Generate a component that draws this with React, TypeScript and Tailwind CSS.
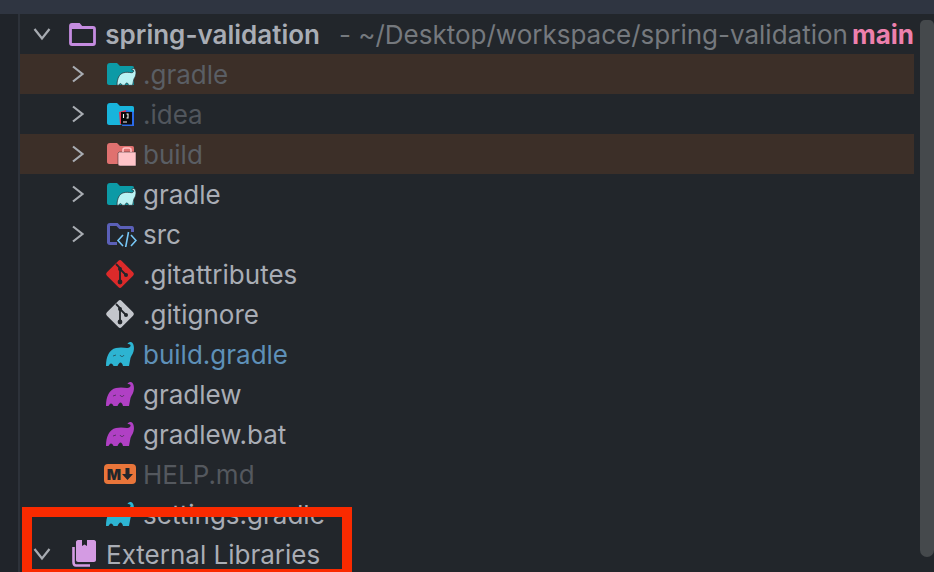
import type { ReactNode } from 'react'

const elephantPath =
	'M0 24 C0 15 3 7.5 10 6 C14 5 18 5.5 21 6 C23 6.2 25 5 24.5 3 C24 2 22.5 2.5 21.5 2 C22 0.5 23.5 0 25 0 C28 1 28.5 6 27.5 9.5 C26.5 13 25 14 24.5 16 L23 24 L17 24 C16.5 22 15.5 20.5 14.5 20.5 C13.5 20.5 12.5 22 11.5 24 L7.5 24 C7 22.5 6 21.5 5 21.5 C4 21.5 3 23 2.5 24 Z'

function Elephant({ color }: { color: string }) {
	return (
		<svg width="28" height="24" viewBox="0 0 28 24">
			<path d={elephantPath} fill={color} />
			<path d="M7 14 L10 13 M14 13 C15 15 17 15 18 13" stroke="#22262b" strokeWidth="1" fill="none" opacity="0.6" />
		</svg>
	)
}

function GradleFolder() {
	return (
		<svg width="30" height="24" viewBox="0 0 30 24" className="mt-0.5 ml-px">
			<path d="M0 3 C0 1 1 0 3 0 L10 0 L13 3 L25 3 C27 3 27 4 27 6 L27 22 L2 22 C1 22 0 21 0 20 Z" fill="#0c9aa6" />
			<g transform="translate(10 5.5) scale(0.68 0.7)">
				<path d={elephantPath} fill="#b9f2f3" stroke="#22262b" strokeWidth="1" />
			</g>
		</svg>
	)
}

function IdeaFolder() {
	return (
		<svg width="30" height="24" viewBox="0 0 30 24" className="mt-0.5 ml-px">
			<path d="M0 3 C0 1 1 0 3 0 L10 0 L13 3 L25 3 C27 3 27 4 27 6 L27 22 L2 22 C1 22 0 21 0 20 Z" fill="#18b4dc" />
			<path d="M12 9 L19 7 L19 22 L13 21 Z" fill="#e6324f" />
			<path d="M19 7 L27 9 L27 23 L15 23 Z" fill="#2a6bea" />
			<rect x="14" y="9" width="11" height="12.5" fill="#0b0b0d" />
			<path d="M16.5 11 L16.5 15 M19.5 11 L21.5 11 M21 11 L21 15 L19.5 15 M16 19 L20 19" stroke="#f4f4f4" strokeWidth="1.1" fill="none" />
		</svg>
	)
}

function BuildFolder() {
	return (
		<svg width="30" height="24" viewBox="0 0 30 24" className="mt-0.5 ml-px">
			<path d="M0 3 C0 1 1 0 3 0 L10 0 L13 3 L25 3 C27 3 27 4 27 6 L27 21 L2 21 C1 21 0 20 0 19 Z" fill="#e0716f" />
			<path d="M12 9 L29 9 L29 23 L13 23 C12 23 11 22 11 21 L11 10 Z" fill="#ffc4c8" stroke="#22262b" strokeWidth="0.5" />
			<path d="M16 9 L16 7 C16 5 17 5 18 5 L22 5 C23 5 24 5 24 7 L24 9" stroke="#ffc4c8" strokeWidth="1.6" fill="none" />
		</svg>
	)
}

function SrcFolder() {
	return (
		<svg width="30" height="24" viewBox="0 0 30 24" className="mt-0.5 ml-px">
			<path d="M1.5 20 L1.5 3 C1.5 2 2 1.5 3 1.5 L10 1.5 L13 4.5 L25 4.5 C25.5 4.5 25.5 5 25.5 6 L25.5 9 M10 20.5 L3 20.5 C2 20.5 1.5 20 1.5 19" stroke="#5b60b8" strokeWidth="3" fill="none" />
			<path d="M16 12 L11 17.5 L16 23 M24 12 L29 17.5 L24 23 M21.5 9 L18.5 25" stroke="#77c7f7" strokeWidth="1.6" fill="none" />
		</svg>
	)
}

function GitIcon({ color }: { color: string }) {
	return (
		<svg width="30" height="30" viewBox="0 0 30 30" className="-ml-px">
			<rect x="4.5" y="4.5" width="21" height="21" rx="2.5" fill={color} transform="rotate(45 15 15)" />
			<path d="M11 5 L15 9 L15 23 M15 10 L21 16" stroke="#22262b" strokeWidth="1.8" fill="none" />
			<circle cx="15" cy="10" r="2" fill="#22262b" />
			<circle cx="21" cy="16" r="2" fill="#22262b" />
			<circle cx="15" cy="23" r="2.4" fill="#22262b" />
		</svg>
	)
}

function MarkdownIcon() {
	return (
		<div className="-ml-0.5 flex h-5 w-8 items-center justify-center gap-px rounded-sm bg-[#e9753a] text-[#22262b]">
			<span className="text-[15px] leading-none font-black">M</span>
			<svg width="11" height="12" viewBox="0 0 11 12">
				<path d="M3.5 0 L7.5 0 L7.5 6 L11 6 L5.5 12 L0 6 L3.5 6 Z" fill="#22262b" />
			</svg>
		</div>
	)
}

function RootFolder() {
	return (
		<svg width="27" height="23" viewBox="0 0 27 23">
			<path d="M1.5 20 L1.5 3 C1.5 2 2 1.5 3 1.5 L10 1.5 L12.5 4.5 L24 4.5 C25 4.5 25.5 5 25.5 6 L25.5 20 C25.5 21 25 21.5 24 21.5 L3 21.5 C2 21.5 1.5 21 1.5 20 Z" stroke="#c58ce0" strokeWidth="2.8" fill="none" />
			<path d="M1 2 L10 1 L13 6 L1 6 Z" fill="#c58ce0" />
		</svg>
	)
}

function LibrariesIcon() {
	return (
		<svg width="26" height="30" viewBox="0 0 26 30">
			<path
				d="M5 3 C5 2 6 1 7 1 L11 1 L11 7 L13.5 5.5 L16 7 L16 1 L23 1 C24 1 25 2 25 3 L25 21 C25 22 24 23 23 23 L7 23 C6 23 5 22 5 21 Z"
				fill="#d49be3"
			/>
			<path d="M2.5 8 L2.5 23 C2.5 25 3.5 26.5 5 26.5 L19 26.5" stroke="#d49be3" strokeWidth="2.6" fill="none" />
		</svg>
	)
}

function Chevron({ open }: { open?: boolean }) {
	return (
		<svg width="18" height="18" viewBox="0 0 18 18" className={open ? '' : '-rotate-90'}>
			<path d="M1.5 4 L9 13.5 L16.5 4" stroke="#a7abb1" strokeWidth="2.2" fill="none" />
		</svg>
	)
}

interface FileRow {
	name: string
	icon: ReactNode
	expandable?: boolean
	ignored?: boolean
	textClass: string
}

const rows: FileRow[] = [
	{ name: '.gradle', icon: <GradleFolder />, expandable: true, ignored: true, textClass: 'text-[#5a5e64]' },
	{ name: '.idea', icon: <IdeaFolder />, expandable: true, textClass: 'text-[#51565d]' },
	{ name: 'build', icon: <BuildFolder />, expandable: true, ignored: true, textClass: 'text-[#5a5e64]' },
	{ name: 'gradle', icon: <GradleFolder />, expandable: true, textClass: 'text-[#a9adb5]' },
	{ name: 'src', icon: <SrcFolder />, expandable: true, textClass: 'text-[#a9adb5]' },
	{ name: '.gitattributes', icon: <GitIcon color="#dc2a2a" />, textClass: 'text-[#a9adb5]' },
	{ name: '.gitignore', icon: <GitIcon color="#c3c6cc" />, textClass: 'text-[#a9adb5]' },
	{ name: 'build.gradle', icon: <Elephant color="#2db4d2" />, textClass: 'text-[#5e90b8]' },
	{ name: 'gradlew', icon: <Elephant color="#b040c4" />, textClass: 'text-[#a9adb5]' },
	{ name: 'gradlew.bat', icon: <Elephant color="#b040c4" />, textClass: 'text-[#a9adb5]' },
	{ name: 'HELP.md', icon: <MarkdownIcon />, textClass: 'text-[#54585e]' },
	{ name: 'settings.gradle', icon: <Elephant color="#2db4d2" />, textClass: 'text-[#a9adb5]' },
]

export default function App() {
	return (
		<div className="relative h-[572px] w-[934px] overflow-hidden bg-[#22262b] font-['Inter',sans-serif] text-[26px]">
			{/* top strip */}
			<div className="h-3.5 bg-[#2f3541]" />

			<div className="flex">
				{/* left gutter */}
				<div className="h-[558px] w-[18px] bg-[#20242a]" />
				<div className="h-[558px] w-0.5 bg-[#2d323a]" />

				{/* tree */}
				<div className="relative w-[894px]">
					<div className="flex h-10 items-center pl-[10px] whitespace-nowrap">
						<div className="flex w-[41px] items-center pl-[3px]">
							<Chevron open />
						</div>
						<div className="flex w-[35px] items-center">
							<RootFolder />
						</div>
						<span className="ml-[3px] font-semibold text-[#a9adb5]">spring-validation</span>
						<span className="ml-[19px] text-[#75797e]">- ~/Desktop/workspace/spring-validation</span>
						<span className="ml-1 font-bold text-[#ee80ad]">main</span>
					</div>

					{rows.map((row) => (
						<div
							key={row.name}
							className={`flex h-10 items-center pl-[49px] whitespace-nowrap ${row.ignored ? 'bg-[#3c2f28]' : ''}`}
						>
							<div className="flex w-[37px] items-center">{row.expandable && <Chevron />}</div>
							<div className="flex w-[37px] items-center">{row.icon}</div>
							<span className={row.textClass}>{row.name}</span>
						</div>
					))}

					<div className="flex h-10 items-center pl-[10px] whitespace-nowrap">
						<div className="flex w-[41px] items-center pl-[3px]">
							<Chevron open />
						</div>
						<div className="flex w-[35px] items-center">
							<LibrariesIcon />
						</div>
						<span className="text-[#a9adb5]">External Libraries</span>
					</div>
				</div>

				{/* scrollbar */}
				<div className="ml-1.5 mt-1.5 h-[537px] w-3.5 rounded-t-[7px] rounded-b-[10px] bg-[#45494c]" />
			</div>

			{/* red annotation box */}
			<div className="absolute top-[507px] left-[22px] h-[72px] w-[330px] border-[10px] border-[#fa2a00]" />
		</div>
	)
}
